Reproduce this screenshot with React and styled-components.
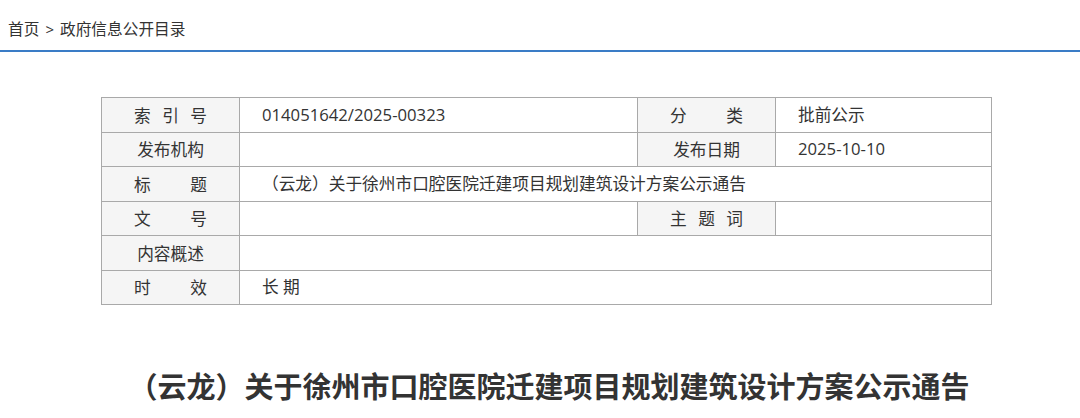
import React from "react";
import styled, { createGlobalStyle } from "styled-components";

const GlobalStyle = createGlobalStyle`
  html, body {
    margin: 0;
    padding: 0;
    background: #fff;
  }
  body {
    font-family: "Open Sans", "Noto Sans CJK SC", sans-serif;
    color: #333;
  }
`;

const rows = [
  [
    { label: "索引号", value: "014051642/2025-00323" },
    { label: "分类", value: "批前公示" },
  ],
  [
    { label: "发布机构", value: "" },
    { label: "发布日期", value: "2025-10-10" },
  ],
  [{ label: "标题", value: "（云龙）关于徐州市口腔医院迁建项目规划建筑设计方案公示通告", wide: true }],
  [
    { label: "文号", value: "" },
    { label: "主题词", value: "" },
  ],
  [{ label: "内容概述", value: "", wide: true }],
  [{ label: "时效", value: "长 期", wide: true }],
];

function App() {
  return (
    <Page>
      <GlobalStyle />
      <Crumbs>
        <a>首页</a>
        <Sep>&gt;</Sep>
        <a>政府信息公开目录</a>
      </Crumbs>
      <Main>
        <InfoTable>
          <colgroup>
            <col style={{ width: 138 }} />
            <col style={{ width: 398 }} />
            <col style={{ width: 138 }} />
            <col style={{ width: 216 }} />
          </colgroup>
          <tbody>
            {rows.map((row, i) => (
              <tr key={i}>
                {row.map((cell) => (
                  <React.Fragment key={cell.label}>
                    <LabelCell>
                      <LabelText $spread={cell.label.length < 4}>{cell.label}</LabelText>
                    </LabelCell>
                    <ValueCell colSpan={cell.wide ? 3 : 1}>{cell.value}</ValueCell>
                  </React.Fragment>
                ))}
              </tr>
            ))}
          </tbody>
        </InfoTable>
        <Title>（云龙）关于徐州市口腔医院迁建项目规划建筑设计方案公示通告</Title>
      </Main>
    </Page>
  );
}

const Page = styled.div`
  width: 1080px;
  min-height: 418px;
`;

const Crumbs = styled.div`
  display: flex;
  align-items: center;
  height: 52px;
  padding: 7px 8px 0;
  box-sizing: border-box;
  border-bottom: 2px solid #3a7cc6;
  font-size: 15.7px;
  color: #333;
  a {
    color: #333;
    text-decoration: none;
  }
`;

const Sep = styled.span`
  margin: 0 6px;
  font-size: 15px;
`;

const Main = styled.div`
  padding: 45px 89px 0 101px;
`;

const InfoTable = styled.table`
  width: 890px;
  border-collapse: collapse;
  table-layout: fixed;
  font-size: 16.7px;
  tr {
    height: 34.5px;
  }
  td {
    border: 1px solid #a9a9a9;
    padding: 0;
    line-height: 20px;
  }
`;

const LabelCell = styled.td`
  background: #f5f5f5;
  text-align: center;
  color: #333;
`;

const LabelText = styled.span`
  display: inline-block;
  width: ${(p) => (p.$spread ? "73px" : "auto")};
  text-align: ${(p) => (p.$spread ? "justify" : "center")};
  text-align-last: ${(p) => (p.$spread ? "justify" : "auto")};
  vertical-align: middle;
`;

const ValueCell = styled.td`
  padding-left: 22px !important;
  color: #333;
  white-space: nowrap;
`;

const Title = styled.h1`
  margin: 62px 0 0;
  text-align: center;
  font-size: 29px;
  font-weight: 700;
  color: #333;
  line-height: 40px;
  padding-left: 6px;
`;

export default App;
